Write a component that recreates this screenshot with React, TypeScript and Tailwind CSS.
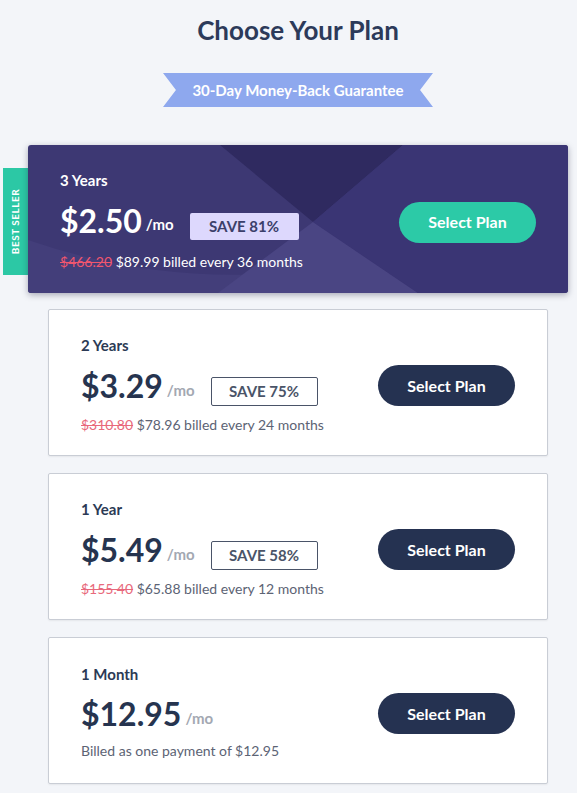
import React from 'react';

type Plan = {
  label: string;
  price: string;
  save?: string;
  was?: string;
  billed: string;
};

const plans: Plan[] = [
  { label: '2 Years', price: '$3.29', save: 'SAVE 75%', was: '$310.80', billed: '$78.96 billed every 24 months' },
  { label: '1 Year', price: '$5.49', save: 'SAVE 58%', was: '$155.40', billed: '$65.88 billed every 12 months' },
  { label: '1 Month', price: '$12.95', billed: 'Billed as one payment of $12.95' },
];

const CardBackdrop: React.FC = () => (
  <svg
    className="absolute inset-0 h-full w-full"
    viewBox="0 0 540 148"
    preserveAspectRatio="none"
    aria-hidden="true"
  >
    <rect width="540" height="148" fill="#3d3873" />
    <path d="M0 95 Q 160 150 330 118 L 390 148 L 0 148 Z" fill="#433e7a" />
    <path d="M285 77 L 190 148 L 390 148 Z" fill="#4a4583" />
    <path d="M192 0 L 375 0 L 285 77 Z" fill="#2f2a60" />
    <path d="M375 0 L 540 0 L 540 148 L 390 148 L 285 77 Z" fill="#3a3574" />
  </svg>
);

const App: React.FC = () => {
  return (
    <div className="min-h-[793px] bg-[#f3f5f9] font-['Lato','Liberation_Sans',sans-serif]">
      <div className="ml-[48px] w-[500px] pt-[14px] pb-8">
        {/* Header */}
        <h1 className="text-center text-[26px] leading-[32px] font-bold text-[#2c3a5a]">
          Choose Your Plan
        </h1>

        <div className="mt-[27px] flex justify-center">
          <div className="flex h-[34px] w-[270px] items-center justify-center bg-[#8ea8ee] text-[15px] font-bold text-white [clip-path:polygon(0_0,100%_0,95.2%_50%,100%_100%,0_100%,4.8%_50%)]">
            30-Day Money-Back Guarantee
          </div>
        </div>

        {/* Featured plan */}
        <div className="relative -mx-5 mt-[38px]">
          <div className="absolute top-[23px] -left-[25px] flex h-[107px] w-[25px] items-center justify-center bg-[#2cc8a5]">
            <span className="-rotate-90 whitespace-nowrap text-[10px] font-bold tracking-[0.5px] text-white">
              BEST SELLER
            </span>
          </div>
          <div className="relative overflow-hidden rounded-[3px] shadow-[0_2px_6px_rgba(30,30,60,0.35)]">
            <CardBackdrop />
            <div className="relative flex h-[148px] items-center justify-between px-8">
              <div className="pt-[3px]">
                <div className="text-[15px] leading-5 font-bold text-white">3 Years</div>
                <div className="mt-[11px] flex items-center">
                  <span className="text-[32px] leading-[36px] font-bold text-white">$2.50</span>
                  <span className="ml-[4px] mt-2 text-[15px] font-bold text-white">/mo</span>
                  <span className="ml-[16px] mt-[12px] flex h-[27px] w-[109px] items-center justify-center rounded-[2px] bg-[#ddd8fd] text-[15px] font-bold text-[#3b3f6a]">
                    SAVE 81%
                  </span>
                </div>
                <div className="mt-[13px] text-[14px] leading-[18px] text-white">
                  <span className="text-[#f0566e] line-through">$466.20</span>{' '}
                  $89.99 billed every 36 months
                </div>
              </div>
              <button className="mt-[6px] h-[41px] w-[137px] rounded-full bg-[#2ccaa7] text-[16px] font-bold text-white">
                Select Plan
              </button>
            </div>
          </div>
        </div>

        {/* Other plans */}
        <div className="mt-4 flex flex-col gap-[17px]">
          {plans.map((plan) => (
            <div
              key={plan.label}
              className="flex h-[147px] items-center justify-between rounded-[2px] border border-[#c9cdd5] bg-white px-8 shadow-[0_1px_2px_rgba(0,0,0,0.06)]"
            >
              <div className="pt-[3px]">
                <div className="text-[15px] leading-5 font-bold text-[#2c3a55]">{plan.label}</div>
                <div className="mt-[12px] flex items-center">
                  <span className="text-[32px] leading-[36px] font-bold text-[#26344f]">{plan.price}</span>
                  <span className="ml-[4px] mt-2 text-[15px] font-bold text-[#a3a8b2]">/mo</span>
                  {plan.save && (
                    <span className="ml-[16px] mt-[10px] flex h-[29px] w-[107px] items-center justify-center rounded-[2px] border border-[#4a5468] text-[15px] font-bold text-[#4a5468]">
                      {plan.save}
                    </span>
                  )}
                </div>
                <div className="mt-[10px] text-[14px] leading-[18px] text-[#5c6374]">
                  {plan.was && (
                    <>
                      <span className="text-[#e8697c] line-through">{plan.was}</span>{' '}
                    </>
                  )}
                  {plan.billed}
                </div>
              </div>
              <button className="mt-[6px] h-[41px] w-[137px] rounded-full bg-[#253251] text-[16px] font-bold text-white">
                Select Plan
              </button>
            </div>
          ))}
        </div>
      </div>
    </div>
  );
};

export default App;
